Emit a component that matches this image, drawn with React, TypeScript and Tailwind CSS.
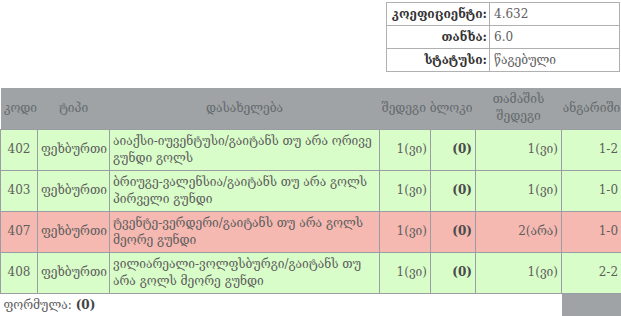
import React from "react";

const rows = [
  { code: "402", type: "ფეხბურთი", name: "აიაქსი-იუვენტუსი/გაიტანს თუ არა ორივე გუნდი გოლს", res: "1(ვი)", block: "(0)", game: "1(ვი)", score: "1-2", red: false },
  { code: "403", type: "ფეხბურთი", name: "ბრიუგე-ვალენსია/გაიტანს თუ არა გოლს პირველი გუნდი", res: "1(ვი)", block: "(0)", game: "1(ვი)", score: "1-0", red: false },
  { code: "407", type: "ფეხბურთი", name: "ტვენტე-ვერდერი/გაიტანს თუ არა გოლს მეორე გუნდი", res: "1(ვი)", block: "(0)", game: "2(არა)", score: "1-0", red: true },
  { code: "408", type: "ფეხბურთი", name: "ვილიარეალი-ვოლფსბურგი/გაიტანს თუ არა გოლს მეორე გუნდი", res: "1(ვი)", block: "(0)", game: "1(ვი)", score: "2-2", red: false },
];

export default function App() {
  const td = "border border-[#9a9ea2] px-[3px] align-middle";
  return (
    <div
      className="w-[621px] h-[316px] overflow-hidden bg-white text-[12px] leading-[17px] text-[#5e5e5e]"
      style={{ fontFamily: '"DejaVu Serif", "DejaVu Sans", serif' }}
    >
      <div className="flex justify-end pt-[2px] pr-[1px]">
        <table className="border-collapse w-[234px]">
          <tbody>
            {[
              ["კოეფიციენტი:", "4.632"],
              ["თანხა:", "6.0"],
              ["სტატუსი:", "წაგებული"],
            ].map(([k, v]) => (
              <tr key={k} className="h-[23px]">
                <td className="border border-[#b0b0b0] w-[103px] text-right font-bold text-[#333] pr-[2px] pl-[3px]">{k}</td>
                <td className="border border-[#b0b0b0] pl-[4px]">{v}</td>
              </tr>
            ))}
          </tbody>
        </table>
      </div>
      <table className="border-collapse w-[621px] mt-[16px] table-fixed">
        <colgroup>
          <col className="w-[37px]" />
          <col className="w-[72px]" />
          <col className="w-[270px]" />
          <col className="w-[51px]" />
          <col className="w-[45px]" />
          <col className="w-[86px]" />
          <col className="w-[60px]" />
        </colgroup>
        <thead>
          <tr className="h-[41px] bg-[#9fa3a6] text-[#656a6c]">
            <th className="font-normal text-center px-0">
              <span className="pl-[3px]">კოდი</span>
            </th>
            <th className="font-normal text-center px-0">ტიპი</th>
            <th className="font-normal text-center px-0">დასახელება</th>
            <th className="font-normal text-right px-0 whitespace-nowrap" colSpan={2}>
              <span className="pr-[3px]">შედეგი ბლოკი</span>
            </th>
            <th className="font-normal text-center px-[4px]">თამაშის შედეგი</th>
            <th className="font-normal text-center px-0 whitespace-nowrap">ანგარიში</th>
          </tr>
        </thead>
        <tbody>
          {rows.map((r) => (
            <tr key={r.code} className={`h-[41px] ${r.red ? "bg-[#f5b9b1]" : "bg-[#d9fdc9]"}`}>
              <td className={`${td} text-center`}>{r.code}</td>
              <td className={`${td} text-left whitespace-nowrap px-[1px]`}>{r.type}</td>
              <td className={`${td} text-left px-[1px]`}>{r.name}</td>
              <td className={`${td} text-right`}>{r.res}</td>
              <td className={`${td} text-right font-bold text-[#4a4a4a]`}>{r.block}</td>
              <td className={`${td} text-right`}>{r.game}</td>
              <td className={`${td} text-right`}>{r.score}</td>
            </tr>
          ))}
          <tr className="h-[25px]">
            <td colSpan={6} className="border-t border-[#9a9ea2] px-[3px] align-middle">
              ფორმულა: <b className="text-[#444]">(0)</b>
            </td>
            <td className="bg-[#9fa3a6]"></td>
          </tr>
        </tbody>
      </table>
    </div>
  );
}
